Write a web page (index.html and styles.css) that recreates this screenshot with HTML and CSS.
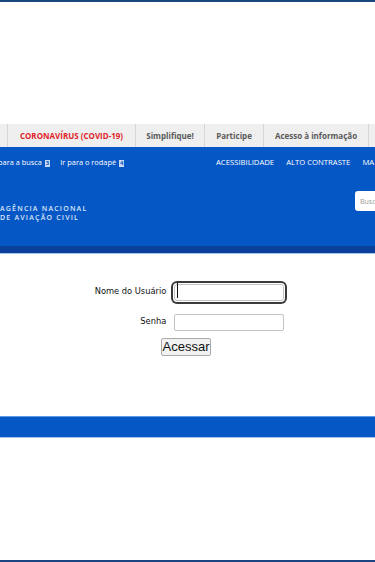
FILE: index.html
```html
<!DOCTYPE html>
<html lang="pt-BR">
<head>
    <meta charset="UTF-8">
    <meta name="viewport" content="width=device-width, initial-scale=1.0">
    <title>ANAC - Acesso</title>
    <link rel="stylesheet" href="styles.css">
</head>
<body>
    <div class="page">
        <div class="top-space"></div>

        <nav class="tabs">
            <span class="tab tab-edge"></span>
            <span class="tab tab-covid">CORONAVÍRUS (COVID-19)</span>
            <span class="tab tab-simp">Simplifique!</span>
            <span class="tab tab-part">Participe</span>
            <span class="tab tab-info">Acesso à informação</span>
            <span class="tab tab-more"></span>
        </nav>

        <header class="header">
            <div class="header-links">
                <div class="skip">
                    <span>para a busca <b class="key">3</b></span>
                    <span>Ir para o rodapé <b class="key">4</b></span>
                </div>
                <div class="access">
                    <span>ACESSIBILIDADE</span>
                    <span>ALTO CONTRASTE</span>
                    <span>MA</span>
                </div>
            </div>
            <div class="header-main">
                <div class="brand">
                    <span>AGÊNCIA NACIONAL</span>
                    <span>DE AVIAÇÃO CIVIL</span>
                </div>
                <div class="search">Busc</div>
            </div>
        </header>
        <div class="header-stripe"></div>

        <main class="login">
            <div class="login-grid">
                <label class="login-label" for="user">Nome do Usuário</label>
                <span class="field focused"><input id="user" type="text"></span>
                <label class="login-label" for="pass">Senha</label>
                <span class="field"><input id="pass" type="password"></span>
            </div>
            <button class="login-btn">Acessar</button>
        </main>

        <footer class="footer-bar"></footer>
    </div>
</body>
</html>
```

FILE: styles.css
```css
html, body {
    margin: 0;
    padding: 0;
    background: #fff;
}
body {
    width: 375px;
    height: 562px;
    overflow: hidden;
    font-family: "Open Sans", "Liberation Sans", sans-serif;
}
.page {
    height: 562px;
    box-sizing: border-box;
    border-top: 2px solid #1b4580;
    border-bottom: 2px solid #1b4580;
    display: flex;
    flex-direction: column;
}
.top-space {
    height: 122px;
}

/* barra de abas */
.tabs {
    height: 23px;
    background: #efefef;
    display: flex;
    white-space: nowrap;
    overflow: hidden;
}
.tab {
    flex: none;
    display: flex;
    align-items: center;
    justify-content: center;
    border-right: 1px solid #d6d6d6;
    font-size: 8px;
    font-weight: 700;
    color: #5a5a5a;
}
.tab-edge { width: 7px; }
.tab-covid { width: 127px; color: #e0252b; }
.tab-simp { width: 68px; }
.tab-part { width: 58px; }
.tab-info { width: 104px; }
.tab-more { width: 6px; border-right: none; }

/* cabeçalho azul */
.header {
    height: 99px;
    background: #0657c6;
    color: #fff;
    display: flex;
    flex-direction: column;
}
.header-links {
    display: flex;
    align-items: center;
    height: 16px;
    margin-top: 7px;
    font-size: 7.4px;
    white-space: nowrap;
}
.skip {
    display: flex;
    gap: 10px;
    width: 216px;
    margin-left: -2px;
}
.key {
    display: inline-block;
    background: #c8d9f2;
    color: #0657c6;
    font-size: 6px;
    line-height: 7px;
    padding: 0 1px;
    margin-left: 1px;
}
.access {
    display: flex;
    gap: 12px;
    font-size: 7.7px;
    margin-left: 2px;
}
.header-main {
    display: flex;
    justify-content: space-between;
    align-items: flex-start;
    margin-top: 21px;
}
.brand {
    display: flex;
    flex-direction: column;
    margin-top: 14px;
    font-size: 7px;
    font-weight: 600;
    letter-spacing: 1.2px;
    line-height: 8.5px;
    color: #dbe6f8;
}
.search {
    width: 20px;
    height: 20px;
    box-sizing: border-box;
    background: #fff;
    border-radius: 3px 0 0 3px;
    font-size: 7px;
    color: #999;
    padding: 6px 0 6px 5px;
    white-space: nowrap;
    overflow: hidden;
}
.header-stripe {
    height: 7px;
    background: #0a3f9c;
    border-bottom: 1px solid #9fc4ef;
}

/* formulário */
.login {
    height: 162px;
    box-sizing: border-box;
    padding-top: 28px;
    display: flex;
    flex-direction: column;
    align-items: center;
    font-family: "DejaVu Sans", sans-serif;
}
.login-grid {
    display: grid;
    grid-template-columns: auto auto;
    column-gap: 8px;
    row-gap: 13px;
    align-items: center;
    margin-left: 4px;
}
.login-label {
    text-align: right;
    font-size: 8.3px;
    color: #111;
}
.field {
    position: relative;
    display: block;
    width: 110px;
    height: 17px;
}
.field input {
    width: 110px;
    height: 17px;
    box-sizing: border-box;
    border: 1px solid #c4c4c4;
    border-radius: 2px;
    padding: 0;
    margin: 0;
    background: #fff;
    outline: none;
}
.focused input {
    box-shadow: 0 0 0 1px #fff, 0 0 0 3px #3b3b3b;
    border-radius: 3px;
}
.focused::after {
    content: "";
    position: absolute;
    left: 3px;
    top: 1px;
    width: 1px;
    height: 15px;
    background: #111;
}
.login-btn {
    margin-top: 9px;
    margin-left: -3px;
    height: 18px;
    padding: 0 1px;
    font-family: "Liberation Sans", sans-serif;
    font-size: 13px;
    line-height: 16px;
    color: #111;
    background: #f2f2f2;
    border: 1px solid #a9a9a9;
    border-radius: 2px;
}

.footer-bar {
    height: 20px;
    background: #0657c6;
    border-top: 1px solid #5c9ae6;
    border-bottom: 1px solid #9fc4ef;
}
```
